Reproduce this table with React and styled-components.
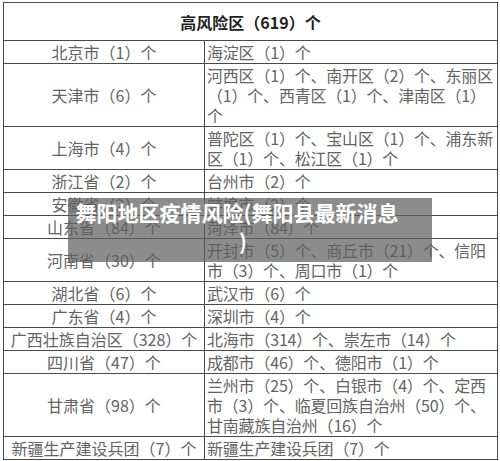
import React from "react";
import styled, { createGlobalStyle } from "styled-components";

const GlobalStyle = createGlobalStyle`
  html, body {
    margin: 0;
    padding: 0;
    background: #fff;
  }
  body {
    font-family: "Noto Sans CJK SC", "Liberation Sans", sans-serif;
  }
`;

const Page = styled.div`
  position: relative;
  width: 500px;
  height: 461px;
  padding: 2px 3px 0 3px;
  box-sizing: border-box;
  overflow: hidden;
`;

const Table = styled.table`
  width: 494px;
  border-collapse: collapse;
  table-layout: fixed;
  border: 1.5px solid #4a4a4a;
`;

const Col = styled.col`
  width: ${(p) => p.$w}px;
`;

const TitleCell = styled.th`
  height: 37px;
  padding: 0;
  border: 1px solid #4a4a4a;
  font-size: 16px;
  font-weight: bold;
  color: #222;
  text-align: center;
  line-height: 20px;
`;

const NameCell = styled.td`
  padding: 1px 0;
  border: 1px solid #4a4a4a;
  font-size: 16px;
  line-height: 20px;
  color: #636363;
  text-align: center;
  vertical-align: middle;
  white-space: nowrap;
`;

const AreaCell = styled.td`
  padding: 1px 0 1px 2px;
  border: 1px solid #4a4a4a;
  font-size: 16px;
  line-height: 20px;
  letter-spacing: -0.2px;
  color: #636363;
  text-align: left;
  vertical-align: middle;
  overflow: hidden;
`;

const Line = styled.span`
  display: block;
  white-space: nowrap;
`;

const Banner = styled.div`
  position: absolute;
  left: 68px;
  top: 198px;
  width: 364px;
  height: 64px;
  padding: 0 26px 0 0;
  box-sizing: border-box;
  background: rgba(95, 95, 95, 0.72);
  color: #fff;
  font-size: 21px;
  font-weight: bold;
  line-height: 29px;
  text-align: center;
`;

const BannerLine = styled.div`
  white-space: nowrap;
  padding-left: ${(p) => p.$indent || 0}px;
`;

const rows = [
  ["北京市（1）个", ["海淀区（1）个"]],
  ["天津市（6）个", ["河西区（1）个、南开区（2）个、东丽区", "（1）个、西青区（1）个、津南区（1）", "个"]],
  ["上海市（4）个", ["普陀区（1）个、宝山区（1）个、浦东新", "区（1）个、松江区（1）个"]],
  ["浙江省（2）个", ["台州市（2）个"]],
  ["安徽省（2）个", ["蚌埠市（2）个"]],
  ["山东省（84）个", ["菏泽市（84）个"]],
  ["河南省（30）个", ["开封市（5）个、商丘市（21）个、信阳", "市（3）个、周口市（1）个"]],
  ["湖北省（6）个", ["武汉市（6）个"]],
  ["广东省（4）个", ["深圳市（4）个"]],
  ["广西壮族自治区（328）个", ["北海市（314）个、崇左市（14）个"]],
  ["四川省（47）个", ["成都市（46）个、德阳市（1）个"]],
  ["甘肃省（98）个", ["兰州市（25）个、白银市（4）个、定西", "市（3）个、临夏回族自治州（50）个、", "甘南藏族自治州（16）个"]],
  ["新疆生产建设兵团（7）个", ["新疆生产建设兵团（7）个"]],
];

export default function App() {
  return (
    <Page>
      <GlobalStyle />
      <Table>
        <colgroup>
          <Col $w={201} />
          <Col $w={293} />
        </colgroup>
        <thead>
          <tr>
            <TitleCell colSpan={2}>高风险区（619）个</TitleCell>
          </tr>
        </thead>
        <tbody>
          {rows.map(([name, areas]) => (
            <tr key={name}>
              <NameCell>{name}</NameCell>
              <AreaCell>
                {areas.map((a, i) => (
                  <Line key={i}>{a}</Line>
                ))}
              </AreaCell>
            </tr>
          ))}
        </tbody>
      </Table>
      <Banner>
        <BannerLine>舞阳地区疫情风险(舞阳县最新消息</BannerLine>
        <BannerLine $indent={12}>)</BannerLine>
      </Banner>
    </Page>
  );
}
